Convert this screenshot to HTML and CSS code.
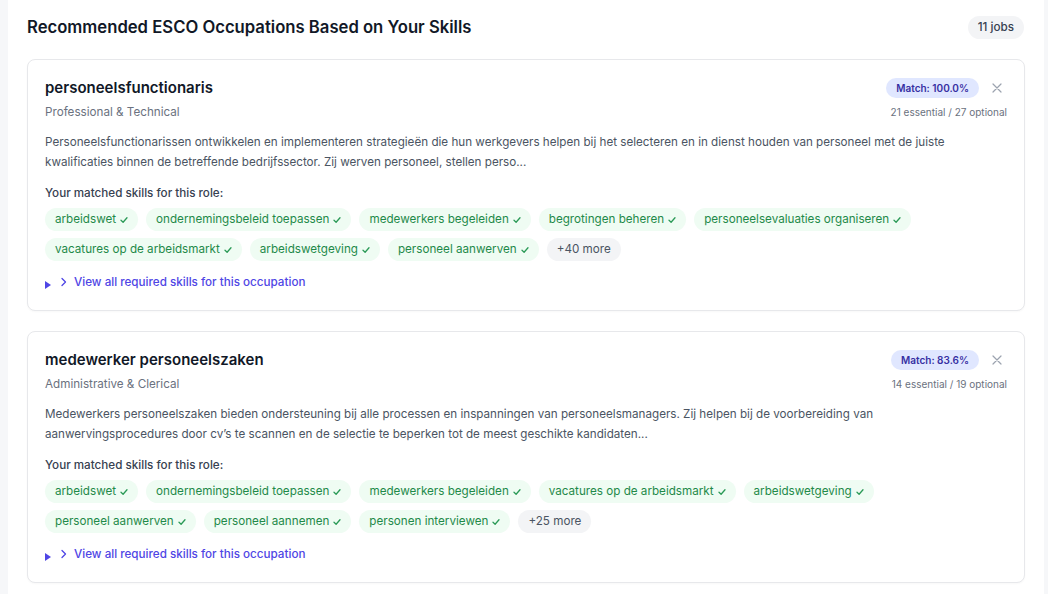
FILE: index.html
```html
<!DOCTYPE html>
<html lang="en">
<head>
<meta charset="utf-8">
<title>Recommended ESCO Occupations</title>
<link rel="stylesheet" href="styles.css">
</head>
<body>
<main class="panel">
  <header class="panel-head">
    <h2 class="panel-title">Recommended ESCO Occupations Based on Your Skills</h2>
    <span class="count-pill">11 jobs</span>
  </header>

  <section class="card">
    <div class="card-head">
      <div class="card-info">
        <h3 class="occ-title">personeelsfunctionaris</h3>
        <div class="occ-cat">Professional &amp; Technical</div>
      </div>
      <div class="card-meta">
        <div class="meta-row">
          <span class="match">Match: 100.0%</span>
          <button class="close" aria-label="Dismiss"><svg viewBox="0 0 10 10" width="10" height="10"><path d="M1 1 L9 9 M9 1 L1 9" stroke="currentColor" stroke-width="1.2" stroke-linecap="round"/></svg></button>
        </div>
        <div class="stats">21 essential / 27 optional</div>
      </div>
    </div>
    <p class="desc">Personeelsfunctionarissen ontwikkelen en implementeren strategieën die hun werkgevers helpen bij het selecteren en in dienst houden van personeel met de juiste kwalificaties binnen de betreffende bedrijfssector. Zij werven personeel, stellen perso...</p>
    <div class="skills-label">Your matched skills for this role:</div>
    <ul class="chips">
      <li class="chip">arbeidswet<svg class="ck" viewBox="0 0 8 8"><path d="M1 4.2 L3.1 6.2 L7 1.8" /></svg></li>
      <li class="chip">ondernemingsbeleid toepassen<svg class="ck" viewBox="0 0 8 8"><path d="M1 4.2 L3.1 6.2 L7 1.8" /></svg></li>
      <li class="chip">medewerkers begeleiden<svg class="ck" viewBox="0 0 8 8"><path d="M1 4.2 L3.1 6.2 L7 1.8" /></svg></li>
      <li class="chip">begrotingen beheren<svg class="ck" viewBox="0 0 8 8"><path d="M1 4.2 L3.1 6.2 L7 1.8" /></svg></li>
      <li class="chip">personeelsevaluaties organiseren<svg class="ck" viewBox="0 0 8 8"><path d="M1 4.2 L3.1 6.2 L7 1.8" /></svg></li>
      <li class="chip">vacatures op de arbeidsmarkt<svg class="ck" viewBox="0 0 8 8"><path d="M1 4.2 L3.1 6.2 L7 1.8" /></svg></li>
      <li class="chip">arbeidswetgeving<svg class="ck" viewBox="0 0 8 8"><path d="M1 4.2 L3.1 6.2 L7 1.8" /></svg></li>
      <li class="chip">personeel aanwerven<svg class="ck" viewBox="0 0 8 8"><path d="M1 4.2 L3.1 6.2 L7 1.8" /></svg></li>
      <li class="chip more">+40 more</li>
    </ul>
    <div class="view-all">
      <span class="tri"></span>
      <svg class="chev" viewBox="0 0 8 10"><path d="M2 1.5 L5.5 5 L2 8.5"/></svg>
      <span>View all required skills for this occupation</span>
    </div>
  </section>

  <section class="card">
    <div class="card-head">
      <div class="card-info">
        <h3 class="occ-title">medewerker personeelszaken</h3>
        <div class="occ-cat">Administrative &amp; Clerical</div>
      </div>
      <div class="card-meta">
        <div class="meta-row">
          <span class="match">Match: 83.6%</span>
          <button class="close" aria-label="Dismiss"><svg viewBox="0 0 10 10" width="10" height="10"><path d="M1 1 L9 9 M9 1 L1 9" stroke="currentColor" stroke-width="1.2" stroke-linecap="round"/></svg></button>
        </div>
        <div class="stats">14 essential / 19 optional</div>
      </div>
    </div>
    <p class="desc">Medewerkers personeelszaken bieden ondersteuning bij alle processen en inspanningen van personeelsmanagers. Zij helpen bij de voorbereiding van aanwervingsprocedures door cv’s te scannen en de selectie te beperken tot de meest geschikte kandidaten...</p>
    <div class="skills-label">Your matched skills for this role:</div>
    <ul class="chips">
      <li class="chip">arbeidswet<svg class="ck" viewBox="0 0 8 8"><path d="M1 4.2 L3.1 6.2 L7 1.8" /></svg></li>
      <li class="chip">ondernemingsbeleid toepassen<svg class="ck" viewBox="0 0 8 8"><path d="M1 4.2 L3.1 6.2 L7 1.8" /></svg></li>
      <li class="chip">medewerkers begeleiden<svg class="ck" viewBox="0 0 8 8"><path d="M1 4.2 L3.1 6.2 L7 1.8" /></svg></li>
      <li class="chip">vacatures op de arbeidsmarkt<svg class="ck" viewBox="0 0 8 8"><path d="M1 4.2 L3.1 6.2 L7 1.8" /></svg></li>
      <li class="chip">arbeidswetgeving<svg class="ck" viewBox="0 0 8 8"><path d="M1 4.2 L3.1 6.2 L7 1.8" /></svg></li>
      <li class="chip">personeel aanwerven<svg class="ck" viewBox="0 0 8 8"><path d="M1 4.2 L3.1 6.2 L7 1.8" /></svg></li>
      <li class="chip">personeel aannemen<svg class="ck" viewBox="0 0 8 8"><path d="M1 4.2 L3.1 6.2 L7 1.8" /></svg></li>
      <li class="chip">personen interviewen<svg class="ck" viewBox="0 0 8 8"><path d="M1 4.2 L3.1 6.2 L7 1.8" /></svg></li>
      <li class="chip more">+25 more</li>
    </ul>
    <div class="view-all">
      <span class="tri"></span>
      <svg class="chev" viewBox="0 0 8 10"><path d="M2 1.5 L5.5 5 L2 8.5"/></svg>
      <span>View all required skills for this occupation</span>
    </div>
  </section>
</main>
</body>
</html>
```

FILE: styles.css
```css
* { box-sizing: border-box; }

html, body {
  margin: 0;
  padding: 0;
}

body {
  background: #f6f7f9;
  font-family: Inter, "Noto Sans", "Liberation Sans", sans-serif;
  color: #111827;
  height: 594px;
  overflow: hidden;
}

.panel {
  margin: 0 4px 0 8px;
  background: #ffffff;
  padding: 13px 19px 20px 19px;
  min-height: 594px;
}

.panel-head {
  display: flex;
  align-items: center;
  justify-content: space-between;
  height: 28px;
  margin-bottom: 18px;
}

.panel-title {
  margin: 0;
  font-size: 16.67px;
  font-weight: 600;
  line-height: 28px;
  color: #111827;
}

.count-pill {
  background: #f3f4f6;
  color: #374151;
  font-size: 11.67px;
  font-weight: 500;
  line-height: 17px;
  padding: 3px 10px;
  border-radius: 999px;
  margin-right: 1px;
}

.card {
  border: 1px solid #e7e8eb;
  border-radius: 8px;
  padding: 16px 17px 18px 17px;
  margin-bottom: 20px;
  background: #fff;
  box-shadow: 0 1px 2px rgba(16, 24, 40, 0.03);
}

.card-head {
  display: flex;
  justify-content: space-between;
  align-items: flex-start;
}

.occ-title {
  margin: 0;
  font-size: 15px;
  font-weight: 600;
  line-height: 24px;
  color: #111827;
}

.occ-cat {
  font-size: 11.67px;
  line-height: 20px;
  color: #6b7280;
  margin-top: 2px;
}

.card-meta {
  display: flex;
  flex-direction: column;
  align-items: flex-end;
  padding-top: 2px;
}

.meta-row {
  display: flex;
  align-items: center;
  gap: 8px;
}

.match {
  background: #e0e7ff;
  color: #3730a3;
  font-size: 10px;
  font-weight: 600;
  line-height: 16px;
  padding: 2px 10px;
  border-radius: 999px;
}

.close {
  width: 20px;
  height: 20px;
  padding: 0;
  margin: 0;
  border: 0;
  background: transparent;
  color: #9ca3af;
  display: flex;
  align-items: center;
  justify-content: center;
}

.stats {
  font-size: 10px;
  line-height: 16px;
  color: #6b7280;
  margin-top: 6px;
}

.desc {
  margin: 10px 0 0 0;
  font-size: 11.67px;
  line-height: 20px;
  color: #4b5563;
}

.skills-label {
  margin-top: 11px;
  font-size: 11.67px;
  line-height: 20px;
  font-weight: 500;
  color: #374151;
}

.chips {
  list-style: none;
  margin: 5px 0 0 0;
  padding: 0;
  display: flex;
  flex-wrap: wrap;
  gap: 7px 8px;
}

.chip {
  display: flex;
  align-items: center;
  gap: 4px;
  background: #effcf3;
  color: #1f8a4a;
  font-size: 11.67px;
  line-height: 17px;
  padding: 3px 10px;
  border-radius: 999px;
}

.chip.more {
  background: #f3f4f6;
  color: #4b5563;
}

.ck {
  width: 8px;
  height: 8px;
  fill: none;
  stroke: #2b9a57;
  stroke-width: 1.3;
  stroke-linecap: round;
  stroke-linejoin: round;
}

.view-all {
  margin-top: 11px;
  display: flex;
  align-items: center;
  font-size: 11.67px;
  line-height: 20px;
  font-weight: 500;
  color: #4f46e5;
}

.tri {
  width: 0;
  height: 0;
  border-left: 6px solid #4f46e5;
  border-top: 4px solid transparent;
  border-bottom: 4px solid transparent;
  margin: 6px 0 0 0;
}

.chev {
  width: 8px;
  height: 10px;
  margin-left: 9px;
  margin-right: 6px;
  fill: none;
  stroke: #4f46e5;
  stroke-width: 1.3;
  stroke-linecap: round;
  stroke-linejoin: round;
}
```
